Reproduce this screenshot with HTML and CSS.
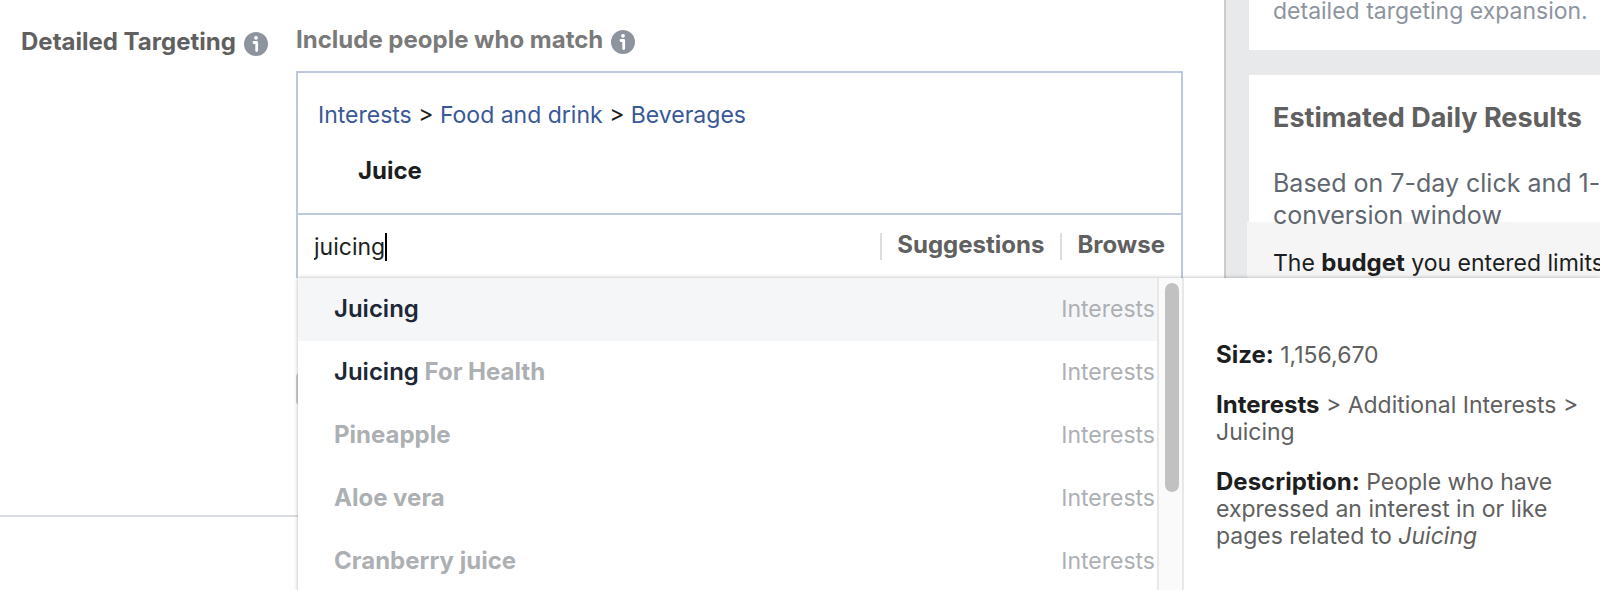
FILE: index.html
```html
<!DOCTYPE html>
<html lang="en">
<head>
    <meta charset="UTF-8">
    <meta name="viewport" content="width=device-width, initial-scale=1.0">
    <title>Detailed Targeting</title>
    <link rel="stylesheet" href="styles.css">
</head>
<body>
    <div class="page">
        <main class="main">
            <section class="targeting">
                <div class="targeting-label">
                    <label for="search">Detailed Targeting</label>
                    <svg class="info-icon" viewBox="0 0 24 24" aria-hidden="true">
                        <circle cx="12" cy="12" r="12" fill="#8d949e"/>
                        <circle cx="12" cy="5.8" r="1.9" fill="#fff"/>
                        <path d="M10 10.5H12.7V18.5" fill="none" stroke="#fff" stroke-width="2.8" stroke-linecap="round" stroke-linejoin="round"/>
                    </svg>
                </div>
                <div class="targeting-field">
                    <div class="field-title">
                        <span>Include people who match</span>
                        <svg class="info-icon" viewBox="0 0 24 24" aria-hidden="true">
                            <circle cx="12" cy="12" r="12" fill="#8d949e"/>
                            <circle cx="12" cy="5.8" r="1.9" fill="#fff"/>
                            <path d="M10 10.5H12.7V18.5" fill="none" stroke="#fff" stroke-width="2.8" stroke-linecap="round" stroke-linejoin="round"/>
                        </svg>
                    </div>
                    <div class="box">
                        <div class="selected">
                            <div class="path">
                                <a href="#">Interests</a> &gt; <a href="#">Food and drink</a> &gt; <a href="#">Beverages</a>
                            </div>
                            <div class="selected-item">Juice</div>
                        </div>
                        <div class="search-row">
                            <div class="search">
                                <input type="text" id="search" class="search-input" value="juicing">
                                <span class="caret"></span>
                            </div>
                            <button type="button" class="tab">Suggestions</button>
                            <button type="button" class="tab">Browse</button>
                        </div>
                        <!-- dropdown -->
                        <div class="menu">
                            <ul class="results">
                                <li class="result active"><b class="match">Juicing</b><span class="type">Interests</span></li>
                                <li class="result"><span class="name"><b class="match">Juicing</b> For Health</span><span class="type">Interests</span></li>
                                <li class="result"><span class="name">Pineapple</span><span class="type">Interests</span></li>
                                <li class="result"><span class="name">Aloe vera</span><span class="type">Interests</span></li>
                                <li class="result"><span class="name">Cranberry juice</span><span class="type">Interests</span></li>
                            </ul>
                            <div class="scrollbar">
                                <div class="thumb"></div>
                            </div>
                            <div class="details">
                                <p><b>Size:</b> 1,156,670</p>
                                <p><b>Interests</b> &gt; Additional Interests &gt; Juicing</p>
                                <p><b>Description:</b> People who have expressed an interest in or like pages related to <i>Juicing</i></p>
                            </div>
                        </div>
                    </div>
                    <button type="button" class="exclude" aria-label="Exclude people"></button>
                </div>
            </section>
        </main>
        <aside class="sidebar">
            <div class="card card-top">
                <p class="hint">detailed targeting expansion.</p>
            </div>
            <div class="card card-results">
                <h2>Estimated Daily Results</h2>
                <p class="window">Based on 7-day click and 1-day view<br>conversion window</p>
            </div>
            <div class="budget">The <b>budget</b> you entered limits</div>
        </aside>
    </div>
</body>
</html>
```
FILE: styles.css
```css
* {
    box-sizing: border-box;
}
body {
    margin: 0;
    font-family: Inter, "Liberation Sans", sans-serif;
    font-size: 23px;
    line-height: 28px;
    color: #1c1e21;
    background: #fff;
}
h2, p, ul {
    margin: 0;
    padding: 0;
}
b, label, h2, .field-title, .name {
    font-size: 24px;
    font-weight: 700;
}
.page {
    display: flex;
    height: 100vh;
    overflow: hidden;
}
.main {
    flex: 1;
    min-width: 0;
}
.targeting {
    display: flex;
    padding: 26px 41px 110px 0;
    border-bottom: 2px solid #dadde1;
}
.targeting-label {
    display: flex;
    align-items: center;
    align-self: flex-start;
    gap: 8px;
    width: 296px;
    padding: 2px 0 0 21px;
    color: #606060;
    white-space: nowrap;
}
.info-icon {
    flex: none;
    width: 24px;
    height: 24px;
    margin-top: 3px;
}
.targeting-field {
    flex: 1;
    min-width: 0;
}
.field-title {
    display: flex;
    align-items: center;
    gap: 8px;
    margin-bottom: 17px;
    color: #7a7a7a;
}
.box {
    position: relative;
    border: 2px solid #bec8dc;
    border-bottom: 0;
}
.selected {
    padding: 28px 20px;
    border-bottom: 2px solid #bec8dc;
}
.path a {
    color: #385898;
    text-decoration: none;
}
.selected-item {
    margin-top: 28px;
    padding-left: 40px;
    font-size: 24px;
    font-weight: 700;
}
.search-row {
    display: flex;
    align-items: center;
    height: 63px;
}
.search {
    display: flex;
    flex: 1;
    align-items: center;
    padding-left: 16px;
}
.search-input {
    field-sizing: content;
    padding: 0;
    border: 0;
    outline: 0;
    font: inherit;
    color: #1c1e21;
    background: none;
}
.caret {
    width: 2px;
    height: 28px;
    background: #000;
}
.tab {
    height: 27px;
    padding: 0 16px 4px 15px;
    border: 0;
    border-left: 2px solid #dadde1;
    font: inherit;
    font-size: 24px;
    font-weight: 700;
    line-height: 23px;
    color: #606060;
    background: none;
    cursor: pointer;
}

/* dropdown */
.menu {
    position: absolute;
    top: 100%;
    left: 0;
    display: flex;
    width: calc(100vw - 298px);
    height: 100vh;
    background: #fff;
    box-shadow: 0 0 4px rgba(0, 0, 0, 0.3);
}
.results {
    flex: 1;
    list-style: none;
}
.result {
    display: flex;
    justify-content: space-between;
    padding: 17px 2px 18px 36px;
}
.result.active {
    background: #f5f6f8;
}
.name {
    color: #adb0b3;
}
.match {
    font-weight: 600;
    color: #1d2737;
}
.type {
    color: #adb0b3;
}
.scrollbar {
    width: 27px;
    padding: 5px 6px;
    border: solid #e8e8e8;
    border-width: 0 2px;
    background: #fafafa;
}
.thumb {
    width: 14px;
    height: 209px;
    border-radius: 7px;
    background: #c1c1c1;
}
.details {
    width: 416px;
    padding: 63px 16px 0 32px;
    line-height: 27px;
    color: #606060;
}
.details p {
    margin-bottom: 22px;
}
.details b {
    color: #1c1e21;
}
.exclude {
    display: block;
    width: 240px;
    height: 32px;
    margin-top: 95px;
    border: 0;
    border-radius: 4px;
    background: #ccd0d5;
}

/* right column */
.sidebar {
    width: 376px;
    padding-left: 23px;
    border-left: 2px solid #ccc;
    background: #e8e9eb;
    overflow: hidden;
}
.card {
    padding-left: 24px;
    background: #fff;
    white-space: nowrap;
}
.card-top {
    height: 50px;
    margin-bottom: 25px;
}
.hint {
    line-height: 22px;
    color: #8d949e;
}
.card-results {
    height: 147px;
    padding-top: 27px;
}
.card-results h2 {
    margin-bottom: 33px;
    font-size: 27px;
    line-height: 32px;
    color: #606060;
}
.window {
    font-size: 25px;
    line-height: 32px;
    color: #606770;
}
.budget {
    height: 100%;
    margin-left: -2px;
    padding: 27px 0 0 26px;
    background: #f5f5f5;
    white-space: nowrap;
}
```
